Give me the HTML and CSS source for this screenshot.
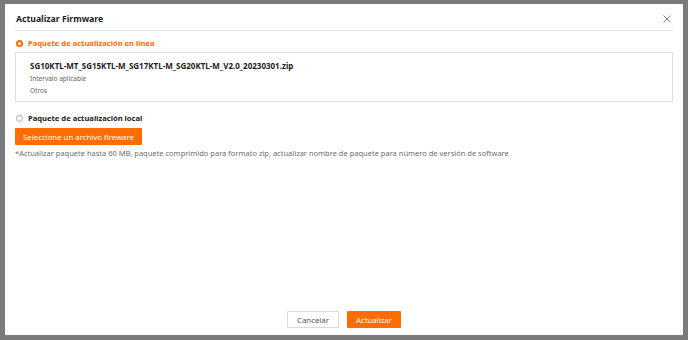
FILE: index.html
```html
<!DOCTYPE html>
<html lang="es">

<head>
    <meta charset="UTF-8">
    <meta name="viewport" content="width=device-width, initial-scale=1.0">
    <title>Actualizar Firmware</title>
    <link rel="stylesheet" href="styles.css">
</head>

<body>
    <div class="mask">
        <div class="modal">
            <!-- cabecera -->
            <div class="modal-header">
                <span class="modal-title">Actualizar Firmware</span>
                <svg class="close" width="8" height="8" viewBox="0 0 8 8">
                    <path d="M0.5 0.5 L7.5 7.5 M7.5 0.5 L0.5 7.5" stroke="#888" stroke-width="1" fill="none" />
                </svg>
            </div>

            <div class="modal-body">
                <label class="radio active">
                    <span class="dot"></span>
                    Paquete de actualización en línea
                </label>

                <div class="package">
                    <div class="package-name">SG10KTL-MT_SG15KTL-M_SG17KTL-M_SG20KTL-M_V2.0_20230301.zip</div>
                    <div class="package-sub">Intervalo aplicable</div>
                    <div class="package-sub">Otros</div>
                </div>

                <label class="radio local">
                    <span class="dot"></span>
                    Paquete de actualización local
                </label>

                <button class="btn btn-primary file-btn">Seleccione un archivo fireware</button>

                <p class="tip">*Actualizar paquete hasta 60 MB, paquete comprimido para formato zip, actualizar nombre de paquete para número de versión de software</p>
            </div>

            <!-- botones -->
            <div class="modal-footer">
                <button class="btn btn-default">Cancelar</button>
                <button class="btn btn-primary">Actualizar</button>
            </div>
        </div>
    </div>
</body>

</html>
```

FILE: styles.css
```css
body {
    margin: 0;
    padding: 0;
    background-color: #7b7b7b;
    font-family: "Noto Sans", "Open Sans", sans-serif;
    color: #222;
}

.mask {
    width: 688px;
    height: 340px;
    padding: 4px 5px 0 5px;
    box-sizing: border-box;
}

.modal {
    width: 678px;
    height: 331px;
    background: white;
    display: flex;
    flex-direction: column;
    padding: 0 10px;
    box-sizing: border-box;
}

.modal-header {
    display: flex;
    align-items: center;
    justify-content: space-between;
    height: 22px;
    padding-top: 4px;
    border-bottom: 1px solid #e6e6e6;
}

.modal-title {
    font-size: 8.7px;
    font-weight: bold;
    padding-left: 1px;
}

.close {
    margin-right: 2px;
}

.modal-body {
    flex-grow: 1;
    padding-top: 6px;
}

.radio {
    display: flex;
    align-items: center;
    gap: 5px;
    font-size: 7.6px;
    font-weight: bold;
    padding-left: 1px;
    height: 12px;
}

.radio .dot {
    width: 7px;
    height: 7px;
    border: 1px solid #aaa;
    border-radius: 50%;
    box-sizing: border-box;
}

.radio.active {
    color: #ff6c00;
}

.radio.active .dot {
    border: 2px solid #ff6c00;
}

.radio.local {
    margin-top: 10px;
}

.package {
    margin-top: 3px;
    border: 1px solid #e0e0e0;
    height: 50px;
    box-sizing: border-box;
    padding: 7px 14px;
}

.package-name {
    font-size: 8px;
    font-weight: bold;
    color: #222;
}

.package-sub {
    font-size: 6.5px;
    color: #666;
    margin-top: 3px;
}

.btn {
    font-family: "Noto Sans", "Open Sans", sans-serif;
    font-size: 7.8px;
    border-radius: 1px;
    cursor: pointer;
}

.btn-primary {
    background: #ff6c00;
    color: white;
    border: none;
}

.btn-default {
    background: white;
    color: #555;
    border: 1px solid #d9d9d9;
}

.file-btn {
    display: block;
    margin-top: 4px;
    height: 17px;
    width: 127px;
}

.tip {
    margin: 3px 0 0 0;
    font-size: 7.5px;
    color: #6e6e6e;
}

.modal-footer {
    display: flex;
    justify-content: center;
    gap: 8px;
    height: 24px;
}

.modal-footer .btn {
    height: 17px;
    padding: 0 9px;
}
```
